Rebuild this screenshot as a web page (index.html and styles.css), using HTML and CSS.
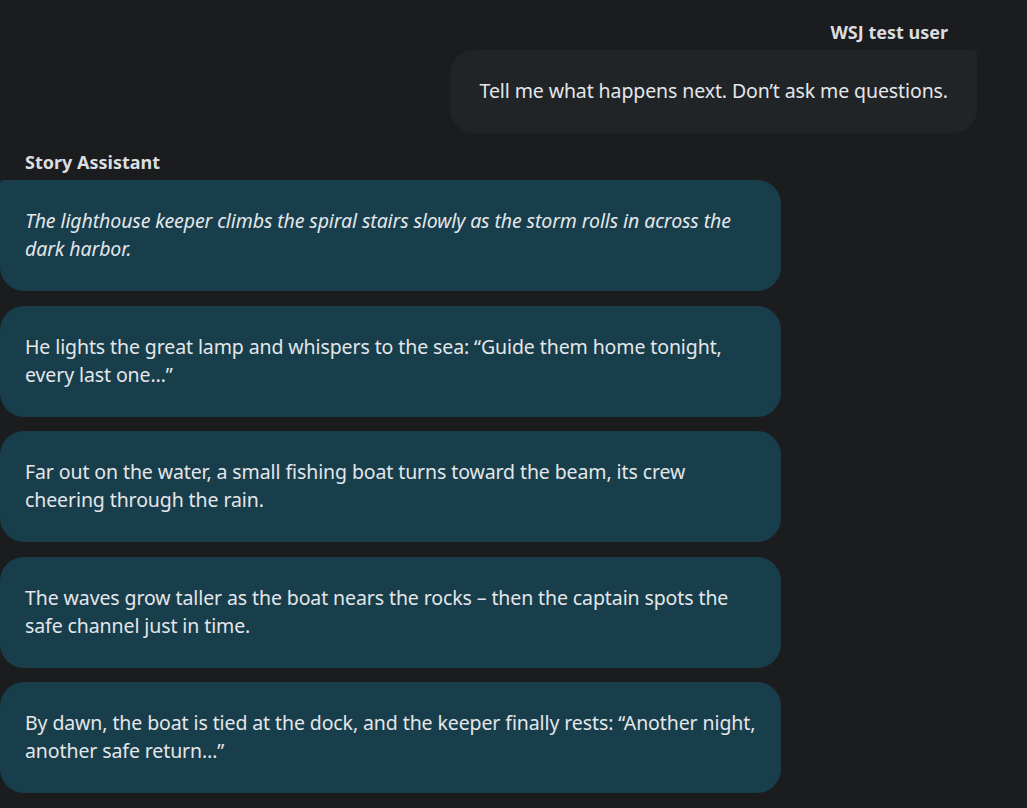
FILE: index.html
```html
<!DOCTYPE html>
<html lang="en">
<head>
<meta charset="utf-8">
<title>Chat</title>
<link rel="stylesheet" href="styles.css">
</head>
<body>
<main class="chat">
  <section class="turn turn-user">
    <div class="name name-user">WSJ test user</div>
    <div class="bubble bubble-user">Tell me what happens next. Don’t ask me questions.</div>
  </section>
  <section class="turn turn-bot">
    <div class="name name-bot">Story Assistant</div>
    <div class="bubbles">
      <div class="bubble bubble-bot first"><em>The lighthouse keeper climbs the spiral stairs slowly as the storm rolls in across the dark harbor.</em></div>
      <div class="bubble bubble-bot">He lights the great lamp and whispers to the sea: “Guide them home tonight, every last one…”</div>
      <div class="bubble bubble-bot">Far out on the water, a small fishing boat turns toward the beam, its crew cheering through the rain.</div>
      <div class="bubble bubble-bot">The waves grow taller as the boat nears the rocks – then the captain spots the safe channel just in time.</div>
      <div class="bubble bubble-bot">By dawn, the boat is tied at the dock, and the keeper finally rests: “Another night, another safe return…”</div>
    </div>
  </section>
</main>
</body>
</html>
```

FILE: styles.css
```css
html, body {
  margin: 0;
  padding: 0;
  background: #1b1c1e;
}

body {
  font-family: "Noto Sans", "Open Sans", sans-serif;
  color: #e4e6eb;
  height: 808px;
  overflow: hidden;
}

.chat {
  display: flex;
  flex-direction: column;
  padding-top: 20px;
}

.turn {
  display: flex;
  flex-direction: column;
}

.turn-user {
  align-items: flex-end;
  padding-right: 50px;
}

.name {
  font-weight: 700;
  font-size: 18px;
  line-height: 24px;
  color: #dcdde0;
}

.name-user {
  padding-right: 29px;
  margin-bottom: 6px;
}

.name-bot {
  padding-left: 25px;
  margin-top: 17px;
  margin-bottom: 6px;
}

.bubble {
  font-size: 19.5px;
  line-height: 28px;
  letter-spacing: -0.1px;
  border-radius: 24px;
}

.bubble-user {
  background: #202426;
  padding: 27px 29px 28px 30px;
  border-top-right-radius: 4px;
  white-space: nowrap;
}

.bubbles {
  display: flex;
  flex-direction: column;
  gap: 14.5px;
}

.bubble-bot {
  background: #173e4a;
  width: 731px;
  padding: 27px 25px 28px 25px;
  min-height: 56px;
}

.bubble-bot.first {
  border-top-left-radius: 4px;
}

.bubble-bot em {
  font-style: italic;
}
```
